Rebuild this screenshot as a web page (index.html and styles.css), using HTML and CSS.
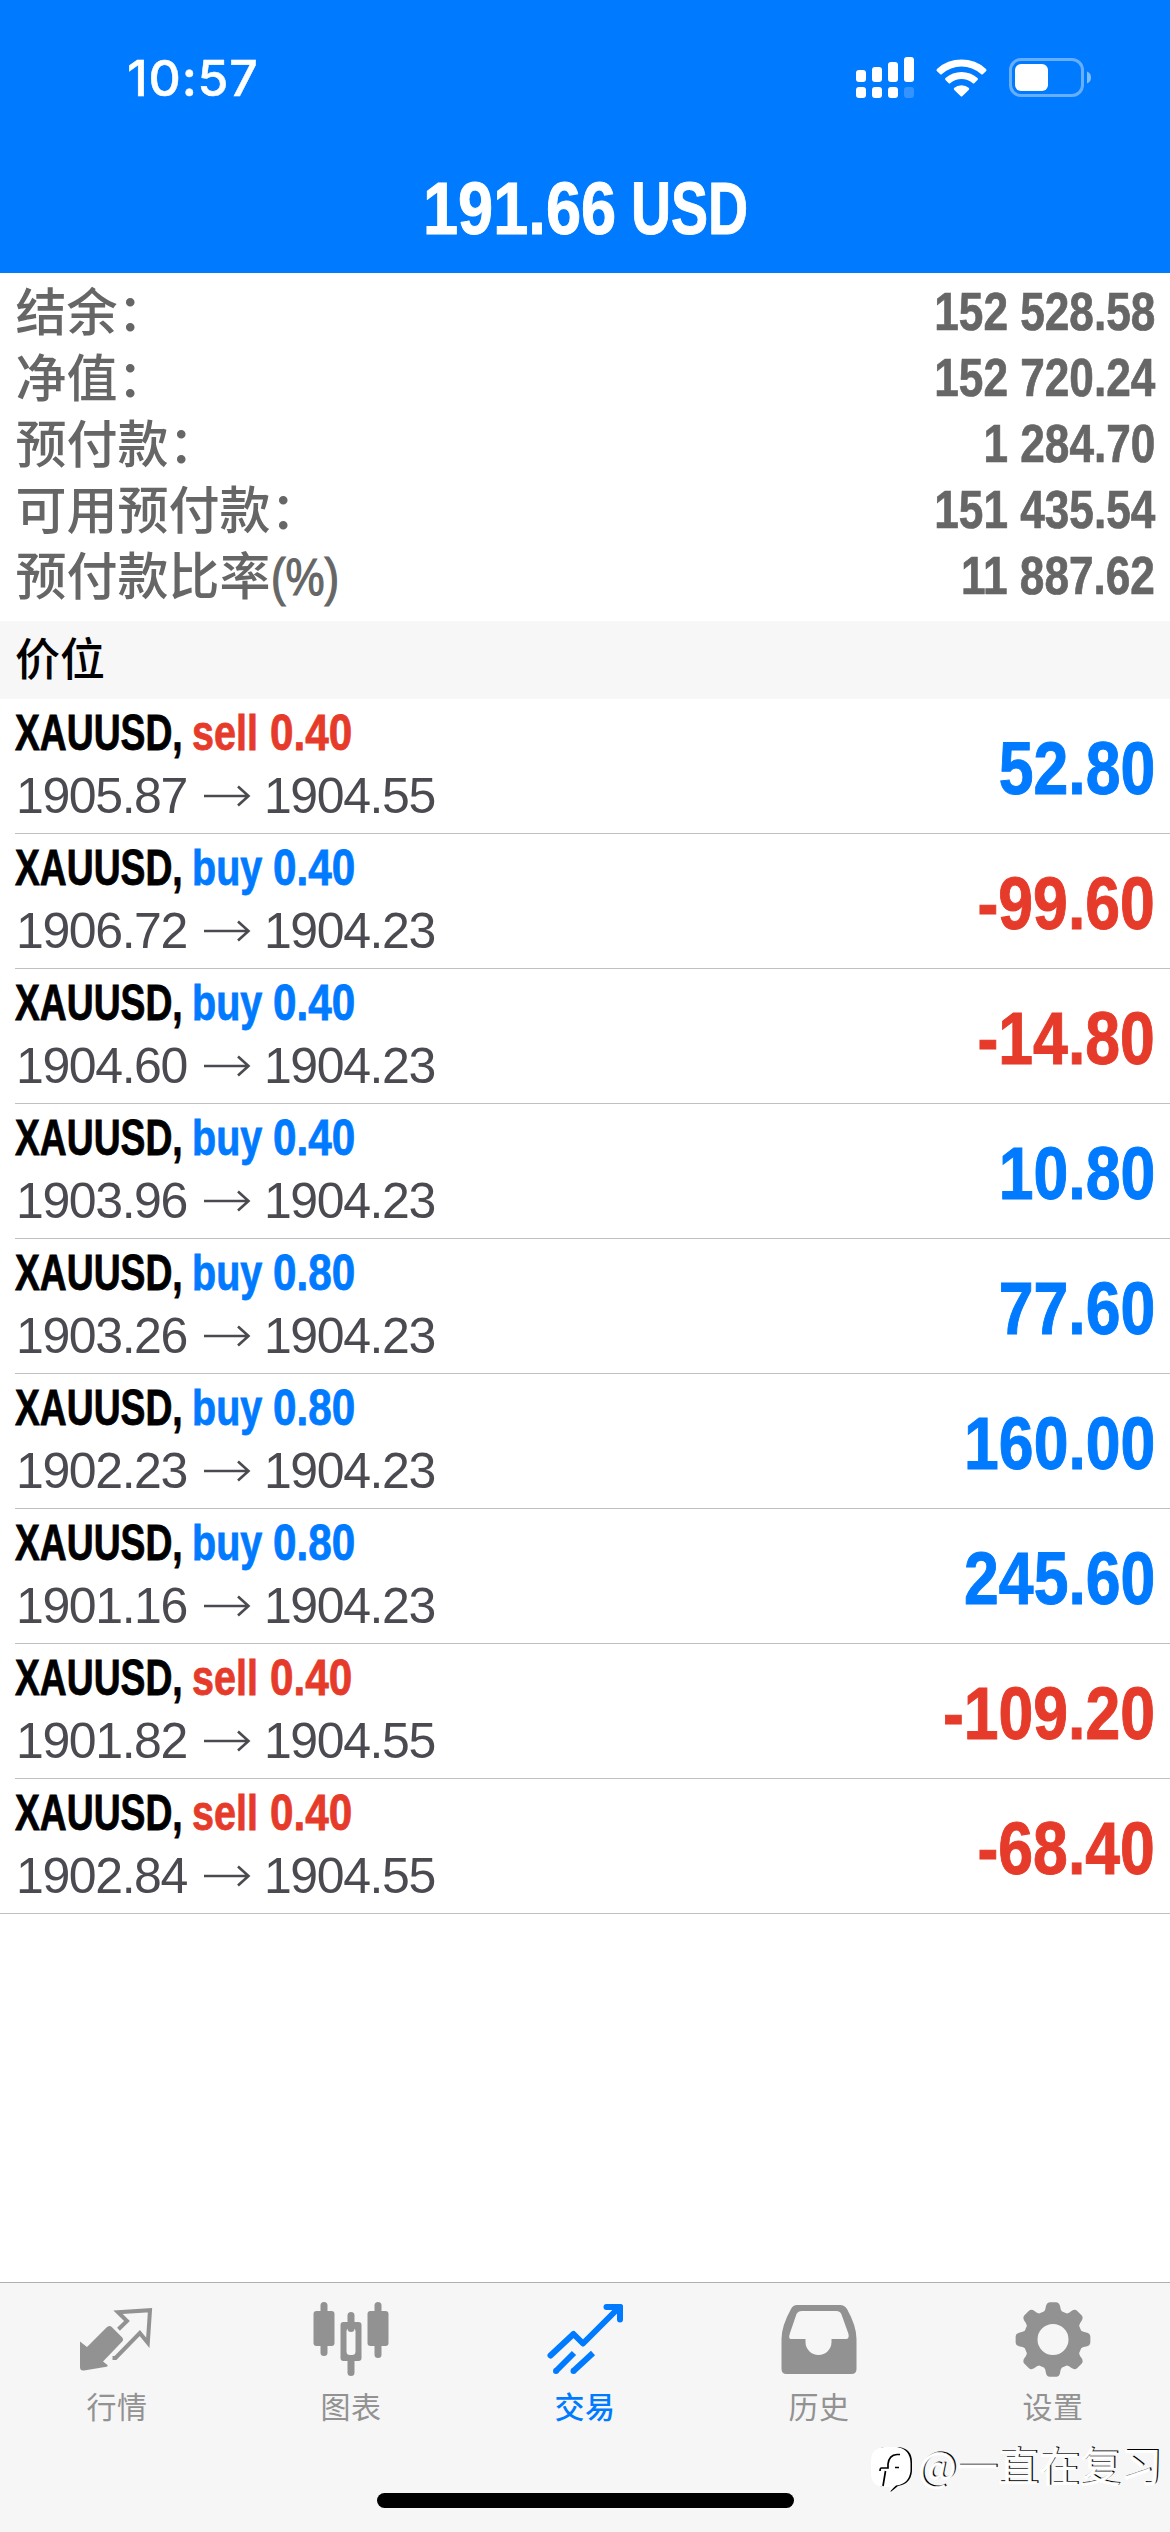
FILE: index.html
```html
<!DOCTYPE html>
<html lang="zh-CN">
<head>
<meta charset="utf-8">
<title>交易</title>
<link rel="stylesheet" href="styles.css">
</head>
<body>
<header class="header">
  <div class="status">
    <span class="time">10:57</span>
    <svg class="status-icons" width="236" height="44" viewBox="0 0 236 44" fill="#fff">
      <rect x="0" y="14" width="10" height="12" rx="3"/><rect x="16" y="11" width="10" height="15" rx="3"/><rect x="32" y="6" width="10" height="20" rx="3"/><rect x="48" y="1" width="10" height="25" rx="3"/>
      <rect x="0" y="31" width="10" height="11" rx="3"/><rect x="16" y="31" width="10" height="11" rx="3"/><rect x="32" y="31" width="10" height="11" rx="3"/><rect x="48" y="31" width="10" height="11" rx="3" opacity=".2"/>
      <path d="M81 13Q80 14.500 81 15.200L84 18Q85 19 86 18A29 29 0 0 1 125 18Q126 19 127 18L130 15.200Q131 14.500 130 13A36 36 0 0 0 81 13Z"/>
      <path d="M89.500 22Q88.500 23 89.500 24L92.500 27Q93.500 28 94.500 27A17 17 0 0 1 116.500 27Q117.500 28 118.500 27L121.500 24Q122.500 23 121.500 22A24 24 0 0 0 89.500 22Z"/>
      <path d="M98 32Q97.500 33 98.300 34L104.500 40Q105.500 41 106.500 40L112.700 34Q113.500 33 113 32A12 12 0 0 0 98 32Z"/>
      <rect x="154.500" y="3.500" width="72" height="36" rx="10.500" fill="none" stroke="#fff" stroke-width="3" opacity=".4"/>
      <rect x="159" y="8" width="33" height="27" rx="6"/>
      <path d="M231 15.500Q235 17 235 21.500Q235 26 231 27.500Z" opacity=".5"/>
    </svg>
  </div>
  <h1 class="title"><span class="title-num">191.66</span><span class="title-cur">USD</span></h1>
</header>
<main class="content">
  <dl class="summary">
    <div class="line"><dt>结余：</dt><dd>152 528.58</dd></div>
    <div class="line"><dt>净值：</dt><dd>152 720.24</dd></div>
    <div class="line"><dt>预付款：</dt><dd>1 284.70</dd></div>
    <div class="line"><dt>可用预付款：</dt><dd>151 435.54</dd></div>
    <div class="line"><dt>预付款比率<span class="pct">(%)</span></dt><dd>11 887.62</dd></div>
  </dl>
  <h2 class="section">价位</h2>
  <ul class="positions" id="positions"></ul>
</main>
<nav class="tabs">
  <div class="tab">
    <svg width="78" height="78" viewBox="0 0 78 78" fill="none"><path d="M2 36.500L9 42L28.500 22.500Q31.300 19.500 34 22.200L44 32.200Q46.200 34.500 44 36.800L25 56.500L29.500 60Q30 61.500 28.500 61.800L6 65.500Q2 66 2 62Z" fill="#929292"/><path d="M40.500 24.300L49 16L40 7.300L72 5.200L69.800 37.800L61.800 28L37.500 53H34.500" stroke="#929292" stroke-width="4"/></svg>
    <span>行情</span>
  </div>
  <div class="tab">
    <svg width="78" height="78" viewBox="0 0 78 78" fill="#929292"><rect x="8.500" y="-3" width="7" height="54" rx="3.500"/><rect x="1.500" y="6" width="21" height="35" rx="3"/><rect x="62.500" y="-3" width="7" height="56" rx="3.500"/><rect x="55.500" y="6" width="21" height="35" rx="3"/><rect x="35.500" y="7" width="7" height="20" rx="3.500"/><rect x="35.500" y="50" width="7" height="21" rx="3.500"/><path fill-rule="evenodd" d="M31.500 17h15q3 0 3 3v33q0 3-3 3h-15q-3 0-3-3V20q0-3 3-3zM38 23q-3.500 0-3.500 3.500v20q0 3.500 3.500 3.500h2q3.500 0 3.500-3.500v-20Q43.500 23 40 23z"/></svg>
    <span>图表</span>
  </div>
  <div class="tab active">
    <svg width="78" height="78" viewBox="0 0 78 78" fill="none" stroke="#007aff" stroke-width="6" stroke-linecap="round" stroke-linejoin="round"><path d="M4.500 50.500L27.500 29L37 38.500L72 3.500M60.500 2H74V14.500"/><path d="M71 2h3v4z"/><path d="M10 66L28 48M27.500 66L47 48" stroke-linecap="butt"/><path d="M10 66h.01M27.500 66h.01"/></svg>
    <span>交易</span>
  </div>
  <div class="tab">
    <svg width="78" height="78" viewBox="0 0 78 78" fill="#929292"><path fill-rule="evenodd" d="M17 0H60Q64.500 0 67 4Q76.500 21 76.500 34V64Q76.500 69 71.500 69H6.500Q1.500 69 1.500 64V34Q1.500 21 11 4Q13 0 17 0ZM22 6Q18 6 16.500 9L10 28Q8 34 11 34H25.500V37A13 13 0 0 0 51.500 37V34H66Q69.500 34 68.500 29L61.500 9.500Q60.500 6 56 6Z"/></svg>
    <span>历史</span>
  </div>
  <div class="tab">
    <svg width="78" height="78" viewBox="0 0 78 78"><path id="gear" fill="#929292" fill-rule="evenodd"/></svg>
    <span>设置</span>
  </div>
  <div class="home"></div>
  <div class="mark">
    <svg width="44" height="48" viewBox="0 0 44 48"><path d="M15 1H29Q42 3 42 16V25Q41 38 28 40Q22 45 20.500 46V41H14Q3 40 3 27V15Q3 2 15 1Z" fill="#000"/><path d="M14 1H27Q40 3 40.500 17V25Q39 38 26 39.500Q21 44 20 46V41H13Q1 40 1 27V15Q1 2 14 1Z" fill="#fff"/><path d="M30 8.500H27Q19 9 18 18V22H11.500Q10 22 10 25M15.500 25L13 40M25 21.500h4" fill="none" stroke="#000" stroke-width="1.700"/></svg>
    <span>@一直在复习</span>
  </div>
</nav>
<script src="app.js"></script>
</body>
</html>
```
FILE: styles.css
```css
* { box-sizing: border-box; margin: 0; padding: 0; }
body {
  width: 1170px;
  height: 2532px;
  display: flex;
  flex-direction: column;
  background: #fff;
  font-family: "Liberation Sans", "Noto Sans CJK SC", sans-serif;
  overflow: hidden;
}
.header { height: 273px; flex: none; background: #007aff; color: #fff; }
.status { height: 156px; padding: 56px 78px 0 127px; display: flex; justify-content: space-between; align-items: flex-start; }
.time { font: 500 50px/44px Inter, sans-serif; -webkit-text-stroke: 0.5px; letter-spacing: 0.8px; }
.title { display: flex; justify-content: center; font-size: 75px; line-height: 104px; font-weight: 700; white-space: nowrap; height: 104px; padding-right: 2px; -webkit-text-stroke: 1px; }
.title-num { width: 208px; transform: scaleX(.842); transform-origin: left; }
.title-cur { width: 114px; transform: scaleX(.74); transform-origin: left; }
.content { flex: 1; }
.summary { height: 348px; padding: 6px 15px 0 15.5px; color: #666; }
.line { height: 66px; display: flex; justify-content: space-between; align-items: flex-start; white-space: nowrap; }
dt { font: 500 51px/66px "Liberation Sans", "Noto Sans CJK SC", sans-serif; display: flex; height: 66px; padding-top: 2px; }
dd { font-size: 53px; line-height: 66px; font-weight: 700; transform: scaleX(.833); transform-origin: right; -webkit-text-stroke: 0.7px; }
.pct { font-size: 51px; transform: scaleX(.86); transform-origin: left; -webkit-text-stroke: 1.2px; }
.section { height: 78px; background: #f7f7f7; color: #000; padding-left: 15px; font: 500 45px/80px "Liberation Sans", "Noto Sans CJK SC", sans-serif; }
.positions { list-style: none; border-bottom: 1px solid #c0c0c2; }
.position { height: 135px; margin-left: 15px; padding: 0 15px 0 0; border-bottom: 1px solid #c0c0c2; display: flex; justify-content: space-between; }
.position:last-child { height: 134px; border-bottom: 0; }
.deal { display: flex; white-space: nowrap; font-size: 50px; font-weight: 700; line-height: 60px; height: 65px; padding-top: 4px; -webkit-text-stroke: 0.8px; }
.deal span { transform-origin: left; }
.symbol { width: 177px; color: #000; transform: scaleX(.745); }
.side { width: 78px; transform: scaleX(.79); }
.buy .side { width: 81px; }
.volume { transform: scaleX(.845); }
.sell .side, .sell .volume, .loss { color: #e63b2a; }
.buy .side, .buy .volume, .gain { color: #007aff; }
.prices { display: flex; align-items: center; padding-left: 1px; font-size: 50px; line-height: 64px; letter-spacing: -1.4px; color: #4b4a50; }
.prices svg { margin: 0 13px 0 16px; }
.profit { font-size: 74px; line-height: 140px; font-weight: 700; transform: scaleX(.845); transform-origin: right; -webkit-text-stroke: 1px; }
.tabs { position: relative; height: 250px; flex: none; background: #f6f6f6; border-top: 1px solid #b0b0b0; display: grid; grid-template-columns: repeat(5, 234px); }
.tab { display: flex; flex-direction: column; align-items: center; padding-top: 22px; color: #929292; font: 400 30px/40px "Noto Sans CJK SC", sans-serif; letter-spacing: 0.5px; }
.tab svg { overflow: visible; margin-bottom: 2px; }
.active { color: #007aff; font-weight: 500; }
.home { position: absolute; left: 377px; top: 210px; width: 417px; height: 15px; border-radius: 8px; background: #000; }
.mark { position: absolute; left: 870px; top: 163px; display: flex; gap: 4px; color: #fff; font: 400 41px/36px "Noto Sans CJK SC", sans-serif; text-shadow: 1.5px -1px 0 #000; -webkit-text-stroke: 0.4px #fff; white-space: nowrap; }
```
FILE: app.js
```js
const positions = [
  ["sell", "0.40", "1905.87", "1904.55", "52.80"],
  ["buy", "0.40", "1906.72", "1904.23", "-99.60"],
  ["buy", "0.40", "1904.60", "1904.23", "-14.80"],
  ["buy", "0.40", "1903.96", "1904.23", "10.80"],
  ["buy", "0.80", "1903.26", "1904.23", "77.60"],
  ["buy", "0.80", "1902.23", "1904.23", "160.00"],
  ["buy", "0.80", "1901.16", "1904.23", "245.60"],
  ["sell", "0.40", "1901.82", "1904.55", "-109.20"],
  ["sell", "0.40", "1902.84", "1904.55", "-68.40"],
];
const arrow = '<svg width="48" height="22" viewBox="0 0 48 22" fill="none" stroke="#4b4a50" stroke-width="2.600"><path d="M1 11H45M35 1.500L45.500 11L35 20.500"/></svg>';
document.getElementById("positions").innerHTML = positions.map(([side, volume, open, now, profit]) => `
  <li class="position ${side}">
    <div>
      <div class="deal"><span class="symbol">XAUUSD,</span><span class="side">${side}</span><span class="volume">${volume}</span></div>
      <div class="prices"><span>${open}</span>${arrow}<span>${now}</span></div>
    </div>
    <div class="profit ${profit.startsWith("-") ? "loss" : "gain"}">${profit}</div>
  </li>`).join("");

// Eight rounded teeth around a ring with a round hole.
const point = (r, a) => `${(39 + r * Math.cos(a)).toFixed(2)} ${(34.5 + r * Math.sin(a)).toFixed(2)}`;
let d = "";
for (let i = 0; i < 8; i++) {
  const a = (i * Math.PI) / 4;
  d += `${i ? "L" : "M"}${point(29.5, a - 0.3)}Q${point(31, a - 0.24)} ${point(34, a - 0.21)}Q${point(37.5, a - 0.17)} ${point(37.5, a - 0.09)}`;
  d += `L${point(37.5, a + 0.09)}Q${point(37.5, a + 0.17)} ${point(34, a + 0.21)}Q${point(31, a + 0.24)} ${point(29.5, a + 0.3)}`;
}
d += "ZM54.5 34.5A15.5 15.5 0 1 0 23.5 34.5A15.5 15.5 0 1 0 54.5 34.5Z";
document.getElementById("gear").setAttribute("d", d);
```
